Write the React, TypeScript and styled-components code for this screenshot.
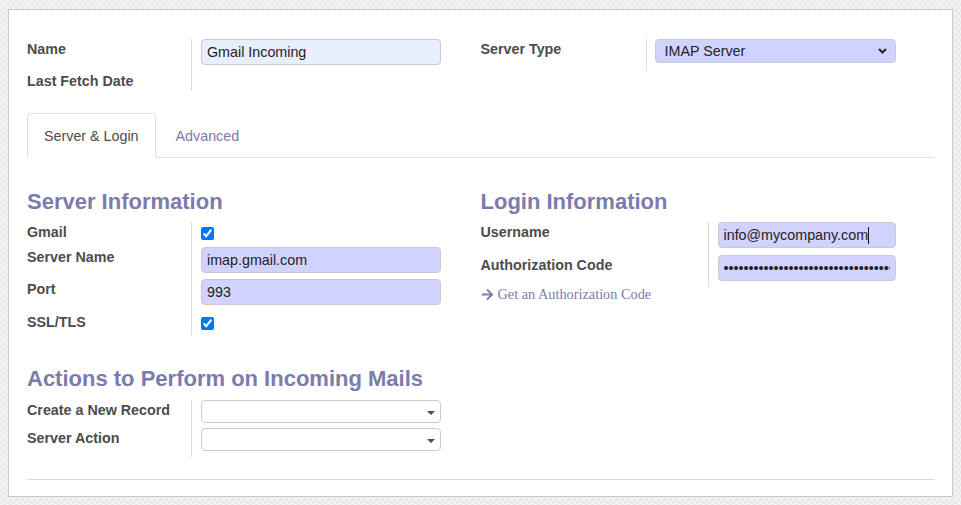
import React from 'react';
import styled, { createGlobalStyle } from 'styled-components';
import { FaArrowRight } from 'react-icons/fa';

const Global = createGlobalStyle`
  html, body { margin: 0; padding: 0; }
  body {
    font-family: "Liberation Sans", Arial, sans-serif;
    font-size: 14.3px;
    color: #4c4c4c;
    background: repeating-conic-gradient(#e9e9e9 0 25%, #f4f4f4 0 50%) 0 0 / 6px 6px;
  }
  * { box-sizing: border-box; }
`;

const Page = styled.div`
  padding: 9px 8px 8px 8px;
`;

const Sheet = styled.div`
  width: 945px;
  background: #fff;
  border: 1px solid #c8c8d0;
  padding: 29px 18px 16px 18px;
`;

const Columns = styled.div`
  display: flex;
`;

const Column = styled.div`
  width: 454px;
  display: flex;
  flex-direction: column;
`;

const FieldGrid = styled.div<{ $labelW: number }>`
  display: grid;
  grid-template-columns: ${(p) => p.$labelW}px auto;
  align-content: start;
`;

const Label = styled.div<{ $h: number }>`
  height: ${(p) => p.$h}px;
  font-weight: 700;
  font-size: 14.3px;
  line-height: 20px;
  color: #4c4c4c;
  white-space: nowrap;
`;

const Value = styled.div<{ $h: number; $pad?: number }>`
  height: ${(p) => p.$h}px;
  border-left: 1px solid #dadada;
  padding-left: ${(p) => p.$pad ?? 9}px;
`;

const TextBox = styled.div<{ $bg: string; $w: number }>`
  width: ${(p) => p.$w}px;
  height: 26px;
  background: ${(p) => p.$bg};
  border: 1px solid #c9c9d4;
  border-radius: 4px;
  padding: 0 5px;
  line-height: 24px;
  font-size: 14.3px;
  color: #222;
  white-space: nowrap;
  overflow: hidden;
  display: flex;
  align-items: center;
`;

const Caret = styled.span`
  display: inline-block;
  width: 1px;
  height: 17px;
  background: #111;
`;

const PasswordInput = styled.input`
  width: 178px;
  height: 26px;
  background: #d2d2ff;
  border: 1px solid #c9c9d4;
  border-radius: 4px;
  padding: 0 5px;
  font-family: "Liberation Sans", Arial, sans-serif;
  font-size: 14.3px;
  color: #222;
  outline: none;
  display: block;
`;

const SelectBox = styled.div<{ $bg: string; $w: number; $h: number }>`
  width: ${(p) => p.$w}px;
  height: ${(p) => p.$h}px;
  background: ${(p) => p.$bg};
  border: 1px solid #c9c9d4;
  border-radius: 4px;
  display: flex;
  align-items: center;
  justify-content: space-between;
  padding: 0 8px 0 9px;
  font-size: 14.3px;
  color: #222;
`;

const DropTriangle = styled.span`
  width: 0;
  height: 0;
  border-left: 4px solid transparent;
  border-right: 4px solid transparent;
  border-top: 4px solid #4c4c4c;
  margin-top: 3px;
  margin-right: -3px;
`;

const Check = styled.input`
  width: 13px;
  height: 13px;
  margin: 5px 0 0 0;
  display: block;
`;

const TabBar = styled.div`
  display: flex;
  gap: 3px;
  height: 45px;
  margin-top: 22px;
  border-bottom: 1px solid #dee2e6;
`;

const Tab = styled.div<{ $active?: boolean }>`
  height: 45px;
  padding: 0 16px;
  line-height: 45px;
  font-size: 14.3px;
  border: 1px solid ${(p) => (p.$active ? '#dee2e6' : 'transparent')};
  border-bottom-color: ${(p) => (p.$active ? '#fff' : 'transparent')};
  border-radius: 4px 4px 0 0;
  background: ${(p) => (p.$active ? '#fff' : 'transparent')};
  color: ${(p) => (p.$active ? '#4c4c4c' : '#7c7bad')};
`;

const TabContent = styled.div`
  padding-top: 31px;
`;

const SectionTitle = styled.h2<{ $mb: number }>`
  margin: 0 0 ${(p) => p.$mb}px 0;
  font-size: 22px;
  line-height: 26px;
  font-weight: 700;
  color: #7c7bad;
`;

const ActionsBlock = styled.div`
  margin-top: 31px;
  width: 454px;
`;

const AuthLink = styled.a`
  display: flex;
  align-items: center;
  gap: 4px;
  margin-top: -1px;
  font-family: "Liberation Serif", "Times New Roman", serif;
  font-size: 14.3px;
  line-height: 16px;
  color: #7c7bad;
  text-decoration: none;
`;

const Divider = styled.div`
  margin-top: 22px;
  border-top: 1px solid #d9d9d9;
`;

const Chevron = () => (
  <svg width="9" height="6" viewBox="0 0 9 6">
    <polyline points="1,1 4.5,4.5 8,1" fill="none" stroke="#222" strokeWidth="2" />
  </svg>
);

export default function App() {
  return (
    <>
      <Global />
      <Page>
        <Sheet>
          <Columns>
            <Column>
              <FieldGrid $labelW={164}>
                <Label $h={32}>Name</Label>
                <Value $h={32}>
                  <TextBox $bg="#e8effb" $w={240}>Gmail Incoming</TextBox>
                </Value>
                <Label $h={20}>Last Fetch Date</Label>
                <Value $h={20} />
              </FieldGrid>
            </Column>
            <Column>
              <FieldGrid $labelW={165}>
                <Label $h={32}>Server Type</Label>
                <Value $h={32} $pad={8}>
                  <SelectBox $bg="#d2d2ff" $w={241} $h={24}>
                    IMAP Server
                    <Chevron />
                  </SelectBox>
                </Value>
              </FieldGrid>
            </Column>
          </Columns>

          <TabBar>
            <Tab $active>Server &amp; Login</Tab>
            <Tab>Advanced</Tab>
          </TabBar>

          <TabContent>
            <Columns>
              <Column>
                <SectionTitle $mb={7}>Server Information</SectionTitle>
                <FieldGrid $labelW={164}>
                  <Label $h={25}>Gmail</Label>
                  <Value $h={25}>
                    <Check type="checkbox" checked readOnly />
                  </Value>
                  <Label $h={32}>Server Name</Label>
                  <Value $h={32}>
                    <TextBox $bg="#d2d2ff" $w={240}>imap.gmail.com</TextBox>
                  </Value>
                  <Label $h={33}>Port</Label>
                  <Value $h={33}>
                    <TextBox $bg="#d2d2ff" $w={240}>993</TextBox>
                  </Value>
                  <Label $h={23}>SSL/TLS</Label>
                  <Value $h={23}>
                    <Check type="checkbox" checked readOnly />
                  </Value>
                </FieldGrid>
              </Column>
              <Column>
                <SectionTitle $mb={7}>Login Information</SectionTitle>
                <FieldGrid $labelW={227}>
                  <Label $h={33}>Username</Label>
                  <Value $h={33}>
                    <TextBox $bg="#d2d2ff" $w={178}>
                      info@mycompany.com
                      <Caret />
                    </TextBox>
                  </Value>
                  <Label $h={32}>Authorization Code</Label>
                  <Value $h={32}>
                    <PasswordInput
                      type="password"
                      readOnly
                      defaultValue="xxxxxxxxxxxxxxxxxxxxxxxxxxxxxxxxxxxxxxxxxx"
                    />
                  </Value>
                </FieldGrid>
                <AuthLink href="#">
                  <FaArrowRight size={13} />
                  Get an Authorization Code
                </AuthLink>
              </Column>
            </Columns>

            <ActionsBlock>
              <SectionTitle $mb={8}>Actions to Perform on Incoming Mails</SectionTitle>
              <FieldGrid $labelW={164}>
                <Label $h={28}>Create a New Record</Label>
                <Value $h={28}>
                  <SelectBox $bg="#fff" $w={240} $h={23}>
                    <span />
                    <DropTriangle />
                  </SelectBox>
                </Value>
                <Label $h={29}>Server Action</Label>
                <Value $h={29}>
                  <SelectBox $bg="#fff" $w={240} $h={23}>
                    <span />
                    <DropTriangle />
                  </SelectBox>
                </Value>
              </FieldGrid>
            </ActionsBlock>
          </TabContent>

          <Divider />
        </Sheet>
      </Page>
    </>
  );
}
